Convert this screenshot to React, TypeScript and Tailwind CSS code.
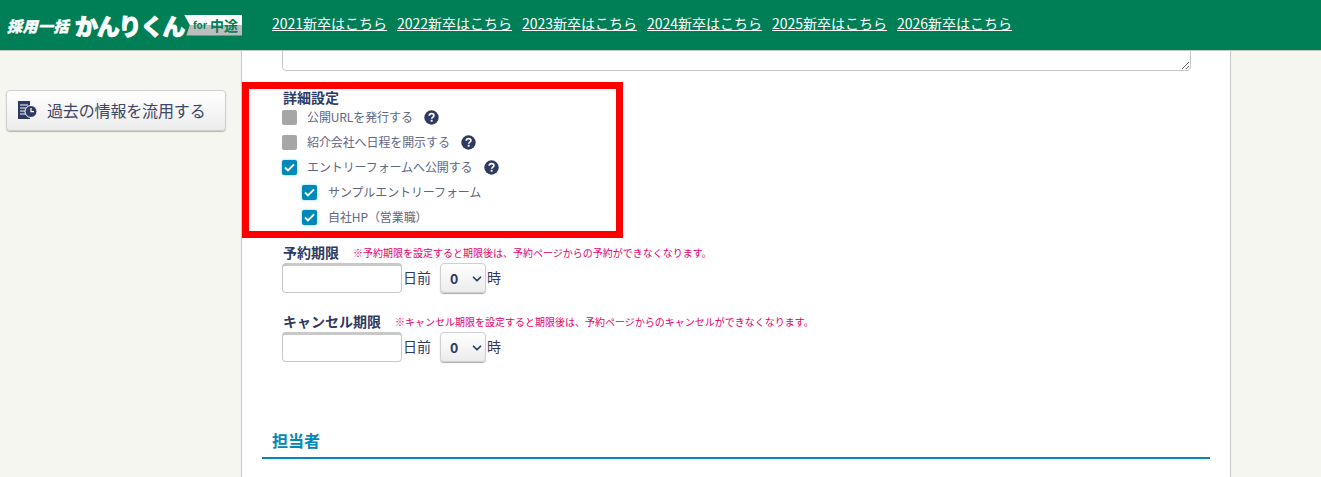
import React from 'react';
import { ChevronDown } from 'lucide-react';

const years = [2021, 2022, 2023, 2024, 2025, 2026];

const HelpIcon = () => (
  <svg width="15" height="15" viewBox="0 0 15 15" className="shrink-0">
    <circle cx="7.5" cy="7.5" r="7.2" fill="#2f3a63" />
    <path d="M5.2 5.8c.1-1.4 1.1-2.2 2.4-2.2 1.3 0 2.3.8 2.3 1.9 0 1.6-2.2 1.6-2.2 3.3" fill="none" stroke="#fff" strokeWidth="1.7" />
    <rect x="6.7" y="9.8" width="1.9" height="1.9" fill="#fff" />
  </svg>
);

const Check = ({ checked }: { checked: boolean }) =>
  checked ? (
    <span className="flex h-[15px] w-[15px] shrink-0 items-center justify-center rounded-[2px] bg-[#0088bb] shadow-[0_0_3px_#7fd0ea]">
      <svg width="11" height="9" viewBox="0 0 11 9">
        <path d="M1 4.5 4 7.4 10 1.4" fill="none" stroke="#fff" strokeWidth="1.9" />
      </svg>
    </span>
  ) : (
    <span className="h-[15px] w-[15px] shrink-0 rounded-[2px] bg-[#a6a6a6]" />
  );

const Option = ({ label, checked, help, sub }: { label: string; checked: boolean; help?: boolean; sub?: boolean }) => (
  <div className={`flex h-[25px] items-center ${sub ? 'pl-[20px]' : ''}`}>
    <Check checked={checked} />
    <span className={`pb-[2px] text-[12px] tracking-[-0.1px] text-[#5d6684] ${sub ? 'ml-[11px]' : 'ml-[10px]'}`}>{label}</span>
    {help && (
      <span className="ml-[11px]">
        <HelpIcon />
      </span>
    )}
  </div>
);

const Deadline = ({ title, note }: { title: string; note: string }) => (
  <div className="h-[69px]">
    <div className="flex h-[18px] items-center">
      <span className="ml-px text-[14px] font-bold text-[#2f3a63]">{title}</span>
      <span className="ml-[14px] text-[10px] text-[#e5006a]">{note}</span>
    </div>
    <div className="mt-[2px] flex items-center text-[14px] text-[#2f3a63]">
      <input className="h-[30px] w-[120px] rounded-[4px] border border-t-[3px] border-[#c8c8c8] bg-white" />
      <span className="ml-px w-[37px] pb-[2px]">日前</span>
      <div className="relative h-[30px] w-[46px]">
        <select className="h-full w-full appearance-none rounded-[4px] border border-[#cfcfcf] bg-gradient-to-b from-white to-[#ececec] pl-[9px] text-[14px] font-bold text-[#2f3a63] shadow-[0_1px_1px_#aaa]">
          <option>0</option>
        </select>
        <ChevronDown size={14} strokeWidth={3} className="absolute top-[9px] right-[2px] text-[#2f3a63]" />
      </div>
      <span className="ml-px pb-[2px]">時</span>
    </div>
  </div>
);

export default function App() {
  return (
    <div
      className="flex h-[477px] flex-col overflow-hidden bg-[#f6f6f0]"
      style={{ fontFamily: '"Noto Sans CJK JP", "Liberation Sans", sans-serif' }}
    >
      <header className="z-10 flex h-[51px] shrink-0 items-center border-b border-[#c6c6c2] bg-[#007f56]">
        <div className="ml-[7px] flex w-[265px] items-center">
          <span className="w-[68px] text-[15px] leading-none font-black tracking-[0.5px] text-white italic [-webkit-text-stroke:0.4px_#fff]">採用一括</span>
          <span className="w-[109px] text-[23px] leading-none font-black tracking-[-1.2px] text-white [-webkit-text-stroke:0.8px_#fff]">かんりくん</span>
          <span className="flex h-[21px] w-[58px] items-center justify-center bg-[linear-gradient(#fff_50%,#bdbdbd_50%)] text-[14px] leading-none font-bold text-[#007f56] [clip-path:polygon(0_0,100%_0,100%_100%,4%_100%,10%_50%)]">
            <span className="mr-[3px] ml-[5px] text-[10px]">for</span>中途
          </span>
        </div>
        <nav className="flex gap-[10px] pb-[3px]">
          {years.map((year) => (
            <a key={year} className="w-[115px] text-[14px] whitespace-nowrap text-white underline">
              {year}新卒はこちら
            </a>
          ))}
        </nav>
      </header>

      <div className="flex min-h-0 flex-1">
        <aside className="w-[241px] shrink-0 pt-[39px] pl-[6px]">
          <button className="flex h-[41px] w-[220px] items-center rounded-[4px] border border-[#cfcfcf] bg-gradient-to-b from-white to-[#ececec] pb-[2px] pl-[10px] text-[16px] tracking-[-0.15px] text-[#3d4768] shadow-[0_1px_1px_#b5b5b5]">
            <svg width="21" height="20" viewBox="0 0 21 20" className="mr-[9px]">
              <path d="M1 1h12v18H1z" fill="#2f3a63" />
              <path d="M3 5h8M3 8h6M3 11h5M3 14h6" stroke="#fff" strokeWidth="1" />
              <circle cx="14" cy="11.5" r="6" fill="#2f3a63" stroke="#fff" strokeWidth="1" />
              <path d="M14 8v3.7h3" fill="none" stroke="#fff" strokeWidth="1.2" />
            </svg>
            過去の情報を流用する
          </button>
        </aside>

        <main className="w-[990px] shrink-0 overflow-hidden border-x border-[#c8c8c8] bg-white">
          <div className="flex h-[20px] items-end pr-[39px] pl-[40px]">
            <textarea className="block h-[40px] w-full shrink-0 rounded-[4px] border border-[#c8c8c8] bg-white" />
          </div>
          <div className="mt-[11px] h-[156px] w-[381px] border-[7px] border-[#ff0000] pl-[33px]">
            <div className="flex h-[17px] items-center pl-px text-[14px] font-bold text-[#2f3a63]">詳細設定</div>
            <div className="-mt-[1px]">
              <Option label="公開URLを発行する" checked={false} help />
              <Option label="紹介会社へ日程を開示する" checked={false} help />
              <Option label="エントリーフォームへ公開する" checked help />
              <Option label="サンプルエントリーフォーム" checked sub />
              <Option label="自社HP（営業職）" checked sub />
            </div>
          </div>
          <div className="mt-[5px] pl-[40px]">
            <Deadline title="予約期限" note="※予約期限を設定すると期限後は、予約ページからの予約ができなくなります。" />
            <Deadline title="キャンセル期限" note="※キャンセル期限を設定すると期限後は、予約ページからのキャンセルができなくなります。" />
          </div>
          <div className="mt-[47px] ml-[20px] w-[948px] border-b-2 border-[#0088bb] pb-[5px] pl-[10px] text-[16px] leading-[24px] font-bold text-[#0088bb]">
            担当者
          </div>
        </main>
      </div>
    </div>
  );
}
